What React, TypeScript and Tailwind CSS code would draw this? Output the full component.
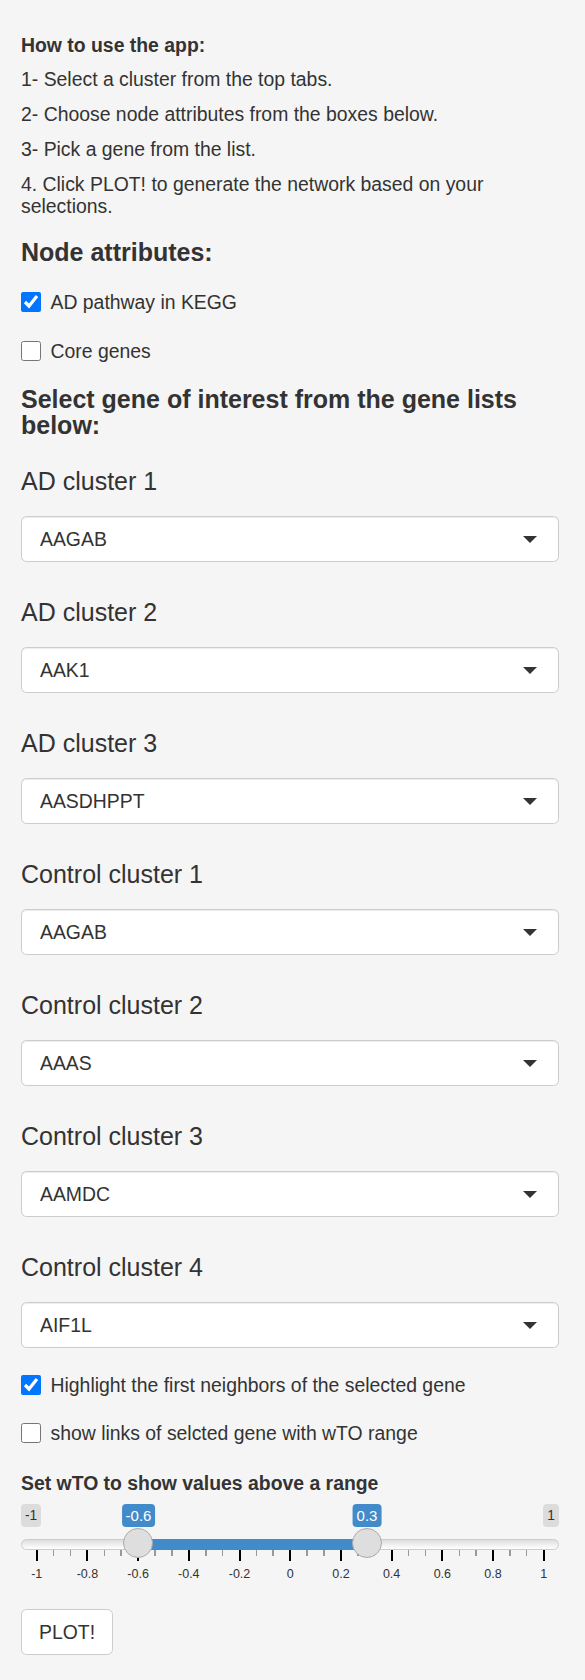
import React from 'react';

const clusters: [string, string][] = [
  ['AD cluster 1', 'AAGAB'],
  ['AD cluster 2', 'AAK1'],
  ['AD cluster 3', 'AASDHPPT'],
  ['Control cluster 1', 'AAGAB'],
  ['Control cluster 2', 'AAAS'],
  ['Control cluster 3', 'AAMDC'],
  ['Control cluster 4', 'AIF1L'],
];

const ticks = ['-1', '-0.8', '-0.6', '-0.4', '-0.2', '0', '0.2', '0.4', '0.6', '0.8', '1'];

const Checkbox = ({ label, checked }: { label: string; checked?: boolean }) => (
  <label className="flex items-center h-[27.5px] leading-[22px] text-[19.4px]">
    <input
      type="checkbox"
      readOnly
      checked={!!checked}
      className="w-[20px] h-[20px] m-0 mr-[9.5px] accent-[#0075ff]"
    />
    <span>{label}</span>
  </label>
);

const GeneSelect = ({ label, value, first }: { label: string; value: string; first?: boolean }) => (
  <div className={first ? 'mt-[29.5px]' : 'mt-[36.5px]'}>
    <div className="text-[25px] leading-[27px]">{label}</div>
    <div className="mt-[21.5px] h-[46px] bg-white border border-[#cccccc] rounded-[5.5px] shadow-[inset_0_1px_1px_rgba(0,0,0,0.075)] flex items-center justify-between pl-[18px] pr-[21px]">
      <span className="text-[19.4px] leading-[22px]">{value}</span>
      <span className="w-0 h-0 border-x-[7px] border-x-transparent border-t-[7px] border-t-[#333333]" />
    </div>
  </div>
);

// ion.rangeSlider look-alike: from -1 to 1, selected -0.6 .. 0.3
const RangeSlider = () => (
  <div className="mt-[10px]">
    <div className="relative flex justify-between h-[23px]">
      <span className="px-[4px] rounded-[4px] bg-black/10 text-[13.75px] leading-[23px]">-1</span>
      <span className="px-[4px] rounded-[4px] bg-black/10 text-[13.75px] leading-[23px]">1</span>
      <span className="absolute top-0 left-[117.5px] -translate-x-1/2 px-[4px] rounded-[4px] bg-[#428bca] text-white text-[15px] leading-[23px]">-0.6</span>
      <span className="absolute top-0 left-[346px] -translate-x-1/2 px-[4px] rounded-[4px] bg-[#428bca] text-white text-[15px] leading-[23px]">0.3</span>
    </div>

    <div className="relative mt-[12px] h-[11px] rounded-full border border-[#cccccc] bg-gradient-to-b from-[#dedede] to-white">
      <div className="absolute -top-[1px] h-[11px] left-[116px] w-[229px] bg-[#428bca]" />
      <div className="absolute -top-[12px] left-[101px] w-[30px] h-[30px] rounded-full border border-[#ababab] bg-[#dedede]" />
      <div className="absolute -top-[12px] left-[330px] w-[30px] h-[30px] rounded-full border border-[#ababab] bg-[#dedede]" />
    </div>

    <div className="flex justify-between items-start h-[11px] ml-[14.7px] mr-[14.2px]">
      {ticks.map((t, i) => (
        <React.Fragment key={t}>
          <span className="w-[2px] h-[11px] bg-black" />
          {i < ticks.length - 1 && (
            <>
              <span className="w-[1.5px] h-[5.5px] bg-[#999999]" />
              <span className="w-[1.5px] h-[5.5px] bg-[#999999]" />
            </>
          )}
        </React.Fragment>
      ))}
    </div>

    <div className="flex justify-between mt-[5px] ml-[14.7px] mr-[14.2px]">
      {ticks.map((t) => (
        <span key={t} className="w-[2px] flex justify-center whitespace-nowrap text-[12.5px] leading-[16px]">
          {t}
        </span>
      ))}
    </div>
  </div>
);

export default function App() {
  return (
    <div className="min-h-[1680px] bg-[#f5f5f5] text-[#333333] pl-[21px] pr-[26px] pt-[34px] font-['Liberation_Sans',Arial,sans-serif]">
      <p className="text-[19.4px] leading-[22px] font-bold">How to use the app:</p>
      <p className="mt-[12px] text-[19.4px] leading-[22px]">1- Select a cluster from the top tabs.</p>
      <p className="mt-[13px] text-[19.4px] leading-[22px]">2- Choose node attributes from the boxes below.</p>
      <p className="mt-[13px] text-[19.4px] leading-[22px]">3- Pick a gene from the list.</p>
      <p className="mt-[13px] text-[19.4px] leading-[22px]">4. Click PLOT! to generate the network based on your selections.</p>

      <h4 className="mt-[21.5px] text-[25px] leading-[27px] font-bold">Node attributes:</h4>
      <div className="mt-[22.5px]">
        <Checkbox label="AD pathway in KEGG" checked />
      </div>
      <div className="mt-[21.5px]">
        <Checkbox label="Core genes" />
      </div>

      <h4 className="mt-[21.5px] text-[25px] leading-[26px] font-bold">Select gene of interest from the gene lists below:</h4>

      {clusters.map(([label, value], i) => (
        <GeneSelect key={label} label={label} value={value} first={i === 0} />
      ))}

      <div className="mt-[23px]">
        <Checkbox label="Highlight the first neighbors of the selected gene" checked />
      </div>
      <div className="mt-[20.5px]">
        <Checkbox label="show links of selcted gene with wTO range" />
      </div>

      <div className="mt-[25.5px] text-[19.4px] leading-[22px] font-bold">Set wTO to show values above a range</div>
      <RangeSlider />

      <button className="mt-[27px] h-[46px] px-[17px] bg-white border border-[#cccccc] rounded-[5.5px] text-[19.4px] leading-[22px] text-[#333333]">
        PLOT!
      </button>
    </div>
  );
}
